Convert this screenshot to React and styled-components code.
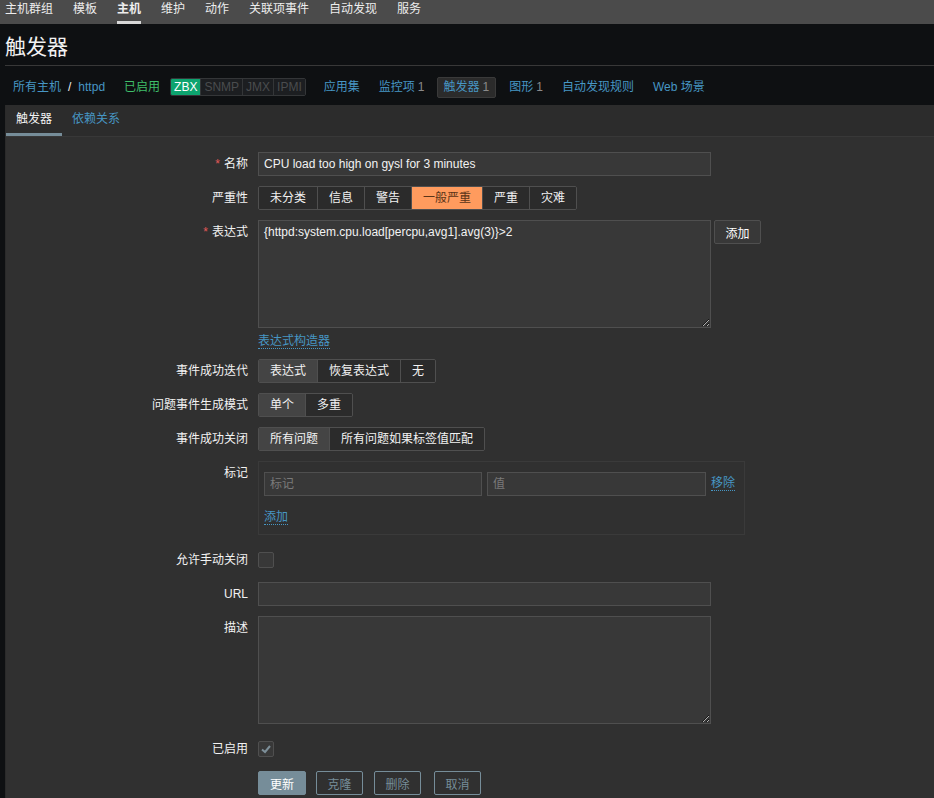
import React from 'react';
import styled, { createGlobalStyle } from 'styled-components';

const GlobalStyle = createGlobalStyle`
  html, body {
    margin: 0;
    padding: 0;
    background: #0e1012;
    font-family: "Liberation Sans", "Noto Sans CJK SC", sans-serif;
    font-size: 12px;
    color: #f2f2f2;
  }
  * { box-sizing: border-box; }
`;

const TopNav = styled.ul`
  display: flex;
  margin: 0;
  padding: 0 0 0 5px;
  height: 24px;
  background: #4b4b4b;
  list-style: none;
`;

const NavItem = styled.li`
  margin-right: 20px;
  padding-top: 2px;
  line-height: 15px;
  color: #ededed;
  border-bottom: 3px solid ${p => (p.$active ? '#d8d8d8' : 'transparent')};
  height: 24px;
  font-weight: ${p => (p.$active ? 'bold' : 'normal')};
`;

const Header = styled.header`
  margin: 0 0 0 5px;
  height: 42px;
  display: flex;
  align-items: center;
  border-bottom: 1px solid #383838;
`;

const Title = styled.h1`
  margin: 0;
  font-size: 21px;
  font-weight: normal;
  color: #f2f2f2;
`;

const Breadcrumbs = styled.nav`
  display: flex;
  align-items: center;
  height: 39px;
  padding: 3px 0 0 12px;
`;

const Crumb = styled.a`
  display: inline-block;
  height: 21px;
  line-height: 19px;
  padding: ${p => (p.$selected ? '0 6px 0 5px' : `0 ${p.$pad ?? 6}px`)};
  color: ${p => p.$color || '#4796c4'};
  text-decoration: none;
  border: 1px solid ${p => (p.$selected ? '#3a3a3a' : 'transparent')};
  background: ${p => (p.$selected ? '#2b2b2b' : 'transparent')};
  border-radius: 2px;
  margin-right: ${p => p.$gap ?? 5}px;
  white-space: nowrap;
`;

const Count = styled.span`
  color: #8a8a8a;
  margin-left: 3px;
`;

const Slash = styled.span`
  color: #f2f2f2;
  margin: 0 6px;
`;

const Badges = styled.div`
  display: flex;
  height: 18px;
  margin: 0 11px 0 9px;
  border: 1px solid #343638;
  border-radius: 2px;
  overflow: hidden;
`;

const Badge = styled.span`
  display: inline-flex;
  align-items: center;
  padding: 0 3px;
  font-size: 12px;
  background: ${p => (p.$on ? '#0da46f' : '#1c1e21')};
  color: ${p => (p.$on ? '#ffffff' : '#4a4c4e')};
  border-left: 1px solid ${p => (p.$on ? '#0da46f' : '#343638')};
  &:first-child { border-left: none; }
`;

const Panel = styled.section`
  margin-left: 5px;
  background: #303030;
  border-left: 1px solid #2a2a2a;
  min-height: 700px;
`;

const TabBar = styled.div`
  display: flex;
  height: 32px;
  background: #2c2c2c;
  border-bottom: 1px solid #383838;
`;

const Tab = styled.div`
  padding: 0 10px;
  line-height: 29px;
  color: ${p => (p.$active ? '#f2f2f2' : '#4796c4')};
  border-bottom: 3px solid ${p => (p.$active ? '#768d99' : 'transparent')};
`;

const Form = styled.div`
  display: grid;
  grid-template-columns: 242px 1fr;
  column-gap: 10px;
  row-gap: 10px;
  padding: 15px 0 10px 0;
`;

const Label = styled.label`
  text-align: right;
  line-height: 24px;
  color: #f2f2f2;
  white-space: nowrap;
  margin-top: ${p => p.$top || 0}px;
`;

const Req = styled.span`
  color: #e45959;
  margin-right: 4px;
`;

const Field = styled.div`
  display: flex;
  flex-direction: ${p => (p.$column ? 'column' : 'row')};
  align-items: flex-start;
  margin-top: ${p => p.$top || 0}px;
`;

const TextInput = styled.input`
  width: ${p => p.$w || 453}px;
  height: 24px;
  background: #383838;
  border: 1px solid #4f4f4f;
  color: #f2f2f2;
  font: inherit;
  padding: 0 5px;
  outline: none;
  &::placeholder { color: #7a7a7a; }
`;

const TextArea = styled.textarea`
  width: 453px;
  height: 108px;
  background: #383838;
  border: 1px solid #4f4f4f;
  color: #f2f2f2;
  font: inherit;
  padding: 4px 5px;
  margin: 0;
  resize: both;
  outline: none;
  display: block;
`;

const Segmented = styled.div`
  display: flex;
  border: 1px solid #4f4f4f;
  border-radius: 2px;
  overflow: hidden;
`;

const Segment = styled.span`
  padding: 0 11px;
  height: 22px;
  line-height: 22px;
  border-left: 1px solid #4f4f4f;
  background: ${p => p.$bg || (p.$on ? '#444444' : '#2b2b2b')};
  color: ${p => p.$fg || '#f2f2f2'};
  &:first-child { border-left: none; }
`;

const Button = styled.button`
  height: 24px;
  width: ${p => p.$w || 47}px;
  padding: 0;
  font: inherit;
  border-radius: 2px;
  margin-left: ${p => p.$ml || 0}px;
  background: ${p => (p.$primary ? '#768d99' : p.$dark ? '#383838' : 'transparent')};
  border: 1px solid ${p => (p.$dark ? '#4f4f4f' : '#768d99')};
  color: ${p => (p.$primary || p.$dark ? '#ffffff' : '#768d99')};
`;

const LinkText = styled.a`
  color: #4796c4;
  text-decoration: none;
  border-bottom: 1px dotted #4796c4;
  line-height: 13px;
  margin-top: ${p => p.$top || 0}px;
`;

const TagBox = styled.div`
  width: 487px;
  border: 1px solid #3a3a3a;
  padding: 10px 5px 10px 5px;
`;

const TagRow = styled.div`
  display: flex;
  align-items: center;
  gap: 5px;
  margin-bottom: 14px;
`;

const Box = styled.span`
  display: inline-flex;
  align-items: center;
  justify-content: center;
  width: 16px;
  height: 16px;
  background: #383838;
  border: 1px solid #4f4f4f;
  border-radius: 2px;
  margin: 4px 0;
`;

const ButtonRow = styled.div`
  display: flex;
`;

const navItems = ['主机群组', '模板', '主机', '维护', '动作', '关联项事件', '自动发现', '服务'];
const severities = ['未分类', '信息', '警告', '一般严重', '严重', '灾难'];

const Checkbox = ({ checked }) => (
  <Box>
    {checked && (
      <svg width="12" height="12" viewBox="0 0 12 12">
        <polyline points="2,6.5 5,9 10,3" fill="none" stroke="#7d8f99" strokeWidth="2" />
      </svg>
    )}
  </Box>
);

export default function App() {
  return (
    <>
      <GlobalStyle />
      <TopNav>
        {navItems.map(n => (
          <NavItem key={n} $active={n === '主机'}>{n}</NavItem>
        ))}
      </TopNav>
      <Header>
        <Title>触发器</Title>
      </Header>
      <Breadcrumbs>
        <Crumb $pad={0} $gap={0}>所有主机</Crumb>
        <Slash>/</Slash>
        <Crumb $pad={0} $gap={17}>httpd</Crumb>
        <Crumb $pad={0} $color="#3fbf6a" $gap={0}>已启用</Crumb>
        <Badges>
          <Badge $on>ZBX</Badge>
          <Badge>SNMP</Badge>
          <Badge>JMX</Badge>
          <Badge>IPMI</Badge>
        </Badges>
        <Crumb>应用集</Crumb>
        <Crumb $gap={6}>监控项<Count>1</Count></Crumb>
        <Crumb $selected $gap={6}>触发器<Count>1</Count></Crumb>
        <Crumb>图形<Count>1</Count></Crumb>
        <Crumb>自动发现规则</Crumb>
        <Crumb>Web 场景</Crumb>
      </Breadcrumbs>
      <Panel>
        <TabBar>
          <Tab $active>触发器</Tab>
          <Tab>依赖关系</Tab>
        </TabBar>
        <Form>
          <Label><Req>*</Req>名称</Label>
          <Field>
            <TextInput defaultValue="CPU load too high on gysl for 3 minutes" />
          </Field>

          <Label>严重性</Label>
          <Field>
            <Segmented>
              {severities.map(s =>
                s === '一般严重' ? (
                  <Segment key={s} $bg="#ff9b5e" $fg="#5a3418">{s}</Segment>
                ) : (
                  <Segment key={s}>{s}</Segment>
                )
              )}
            </Segmented>
          </Field>

          <Label><Req>*</Req>表达式</Label>
          <Field $column>
            <Field>
              <TextArea defaultValue="{httpd:system.cpu.load[percpu,avg1].avg(3)}>2" />
              <Button $dark $ml={3}>添加</Button>
            </Field>
            <LinkText $top={7}>表达式构造器</LinkText>
          </Field>

          <Label>事件成功迭代</Label>
          <Field>
            <Segmented>
              <Segment $on>表达式</Segment>
              <Segment>恢复表达式</Segment>
              <Segment>无</Segment>
            </Segmented>
          </Field>

          <Label>问题事件生成模式</Label>
          <Field>
            <Segmented>
              <Segment $on>单个</Segment>
              <Segment>多重</Segment>
            </Segmented>
          </Field>

          <Label>事件成功关闭</Label>
          <Field>
            <Segmented>
              <Segment $on>所有问题</Segment>
              <Segment>所有问题如果标签值匹配</Segment>
            </Segmented>
          </Field>

          <Label>标记</Label>
          <Field>
            <TagBox>
              <TagRow>
                <TextInput $w={218} placeholder="标记" />
                <TextInput $w={219} placeholder="值" />
                <LinkText>移除</LinkText>
              </TagRow>
              <LinkText>添加</LinkText>
            </TagBox>
          </Field>

          <Label $top={3}>允许手动关闭</Label>
          <Field $top={3}>
            <Checkbox />
          </Field>

          <Label>URL</Label>
          <Field>
            <TextInput />
          </Field>

          <Label>描述</Label>
          <Field>
            <TextArea />
          </Field>

          <Label $top={3}>已启用</Label>
          <Field $top={3}>
            <Checkbox checked />
          </Field>

          <div />
          <ButtonRow>
            <Button $primary $w={48}>更新</Button>
            <Button $ml={10}>克隆</Button>
            <Button $ml={11}>删除</Button>
            <Button $ml={13}>取消</Button>
          </ButtonRow>
        </Form>
      </Panel>
    </>
  );
}
